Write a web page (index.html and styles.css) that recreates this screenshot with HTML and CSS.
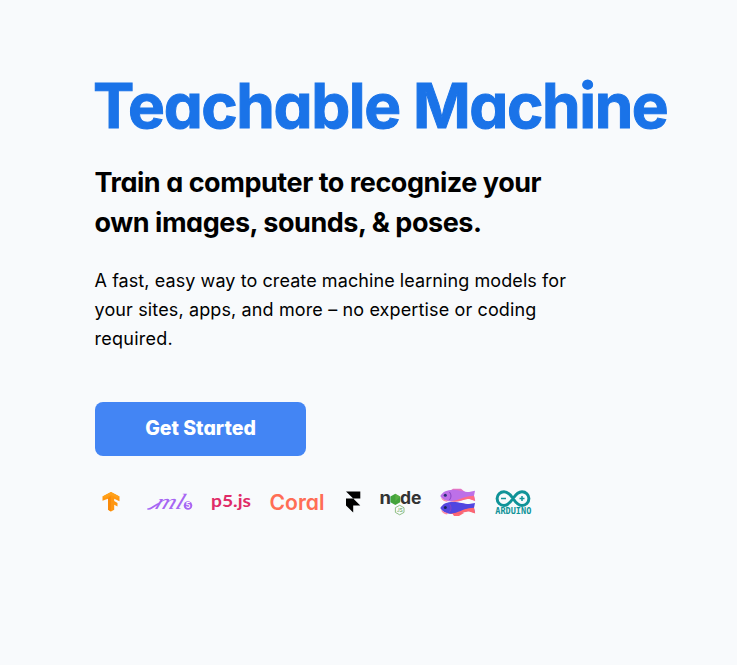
FILE: index.html
```html
<!DOCTYPE html>
<html lang="en">
<head>
<meta charset="utf-8">
<title>Teachable Machine</title>
<link rel="stylesheet" href="styles.css">
</head>
<body>
<main class="hero">
  <h1 class="title">Teachable Machine</h1>
  <h2 class="tagline">Train a computer to recognize your<br>own images, sounds, &amp; poses.</h2>
  <p class="intro"><span class="intro-a">A fast, easy way to create machine learning models for</span><br><span class="intro-b">your sites, apps, and more – no expertise or coding</span><br><span class="intro-c">required.</span></p>
  <a class="button" href="#">Get Started</a>
  <div class="logos">
    <svg class="tensorflow" width="18" height="20" viewBox="0 0 18 20" aria-label="TensorFlow">
      <path fill="#ff9610" d="M9 0 .5 4.500v4.300L6 6.800v10.900l3 1.700 3.200-1.700v-5l3.300 1.800v-3.600l-3.300-1.900V6.800l5.300 2.400V4.500z"/>
      <path fill="#f98a0a" d="M9 4v15.400l-3-1.700V6.300z"/>
      <path fill="#ffa11a" d="m9 0 8.500 4.500L15 6 9 3 3 6 .5 4.500z"/>
    </svg>
    <svg width="47" height="22" viewBox="0 0 47 22" aria-label="ml5">
      <path fill="none" stroke="#a766f3" stroke-width="1.700" stroke-linecap="round" d="M1 18C4 18.500 8 14 12 12.500"/>
      <text class="script" transform="translate(7 18) skewX(-20)" textLength="28" lengthAdjust="spacingAndGlyphs">ml</text>
      <circle cx="41" cy="14.500" r="4.300" fill="#a766f3"/>
      <text class="five" x="41" y="17" text-anchor="middle">5</text>
    </svg>
    <svg width="40" height="24" viewBox="0 0 40 24"><text class="p5" x="-1" y="17" textLength="40" lengthAdjust="spacingAndGlyphs">p5.js</text></svg>
    <svg width="55" height="22" viewBox="0 0 55 22"><text class="coral" x="-.5" y="19" textLength="55" lengthAdjust="spacingAndGlyphs">Coral</text></svg>
    <svg class="framer" width="15" height="22" viewBox="0 0 15 22" aria-label="Framer"><path d="M0 .5h14.300v7H7.200zM0 7.500h7.200l7.100 7H7.200v7L0 14.500z"/></svg>
    <svg class="nodejs" width="42" height="28" viewBox="0 0 42 28">
      <g class="node"><text x="-.5" y="16" textLength="11.500" lengthAdjust="spacingAndGlyphs">n</text><text x="20" y="16" textLength="21.500" lengthAdjust="spacingAndGlyphs">de</text></g>
      <path fill="#43a33b" d="m15.300 5.700 4.900 2.800v5.700L15.300 17l-4.900-2.800V8.500z"/>
      <path fill="#77bd4d" d="m15.300 5.700 4.900 2.800-4.900 5z" opacity=".4"/>
      <path fill="#f8fafc" stroke="#73ae68" stroke-width=".8" d="m19.700 17.300 4.300 2.400v4.700l-4.300 2.400-4.300-2.400v-4.700z"/>
      <text class="js" x="19.700" y="24.200" text-anchor="middle">JS</text>
    </svg>
    <svg width="36" height="29" viewBox="0 0 36 29" aria-label="Glitch">
      <path fill="#e273c4" d="M8 4 13 .8h8L25 4z"/>
      <path fill="#bd70e8" d="M.3 8C3 3.500 7 2 13 2c7 0 11 2 16 2l6-1.200-1 5 1 5-6-2.300c-5 0-7 3-15 3C7 13.500 3 12.500.3 8"/>
      <path fill="#ff6c86" d="M10 13.300C19 12.500 23 9 29 8.300l5-.5 1.200 5.200-6-2c-6 0-9 4-19.200 2.300z"/>
      <path fill="#ff6874" d="M12 25h12l-5 3h-5z"/>
      <path fill="#5246e0" d="M.3 20c2.700-4.500 6.700-6 12.700-6 7 0 11 2 16 2l6-1-1 5 1 5-6-2c-5 0-7 3-15 3-7 0-11-1.500-13.700-6"/>
      <path fill="#ff6670" d="M10 25.800C19 25 23 21 29 20.300l5-.5 1.200 5.700-6-2c-6 0-9 4-19.200 2.300z"/>
      <path fill="#ff88a0" d="M1 9.500c3 2.500 5 3 7 3l-1 1.200C4 13.500 2 12 1 9.500M1 22c3 2 5 3 7 3l-1 1.500C4 26 2 24.500 1 22"/>
      <path fill="none" stroke="#8a45c4" d="M9.500 4c2 3 2 5 0 8M9.500 16c2 3 2 5 0 8"/>
      <circle cx="5.300" cy="7.300" r="1.500" fill="#283077"/><circle cx="5.300" cy="19.500" r="1.500" fill="#17235f"/>
    </svg>
    <svg class="uno" width="37" height="27" viewBox="0 0 37 27">
      <path fill="none" stroke="#109398" stroke-width="3" d="M18 9.500C15 5 12.500 2.700 9 2.700a6.900 6.900 0 0 0 0 13.800c3.500 0 6-2.500 9-7s5.500-6.800 9-6.800a6.900 6.900 0 0 1 0 13.800c-3.500 0-6-2.500-9-7z"/>
      <path stroke="#109398" stroke-width="1.500" d="M6 9.500h5M24.500 9.500h5M27 7v5"/>
      <text class="arduino" x=".3" y="25.300" textLength="36" lengthAdjust="spacingAndGlyphs">ARDUINO</text>
    </svg>
  </div>
</main>
</body>
</html>
```
FILE: styles.css
```css
body {
  margin: 0;
  min-height: 665px;
  background: #f8fafc;
  color: #000;
  font-family: Inter, "Open Sans", sans-serif;
}
.hero {
  padding: 66px 0 0 95px;
}
.title, .tagline, .button, .coral {
  font-feature-settings: "cv11";
}
.title {
  margin: 0 0 0 -2px;
  font-size: 62px;
  line-height: 80px;
  font-weight: 700;
  letter-spacing: -1.420px;
  color: #1a73e8;
  -webkit-text-stroke: 1px #1a73e8;
  white-space: nowrap;
}
.tagline {
  margin: 17px 0 0 -0.500px;
  font-size: 27px;
  line-height: 40px;
  font-weight: 700;
  letter-spacing: -0.450px;
  white-space: nowrap;
}
.intro {
  margin: 23px 0 0 -0.500px;
  font-size: 18px;
  line-height: 29px;
  white-space: nowrap;
}
.intro-a { letter-spacing: 0.080px; }
.intro-b { letter-spacing: 0.130px; }
.intro-c { letter-spacing: 0.260px; }
.button {
  display: flex;
  align-items: center;
  justify-content: center;
  box-sizing: border-box;
  width: 211px;
  height: 54px;
  margin-top: 49px;
  padding-bottom: 2px;
  border-radius: 8px;
  background: #4385f4;
  color: #fff;
  font-size: 19.500px;
  font-weight: 800;
  text-decoration: none;
}
.logos {
  display: flex;
  align-items: center;
  gap: 18px;
  height: 30px;
  margin: 31px 0 0 7px;
}
.logos svg {
  flex: none;
  overflow: visible;
}
.logos .tensorflow { margin-right: 9px; }
.logos .framer { margin-left: 3px; }
.logos .nodejs { margin-left: 1px; }
.logos .uno { margin-left: 1px; }
.script { font: italic 22px "Liberation Serif", serif; fill: #a766f3; }
.five { font: 700 7px Inter, sans-serif; fill: #fff; }
.p5 { font: 700 17.500px Lato, sans-serif; fill: #e02b68; }
.coral { font-family: Inter, sans-serif; font-weight: 600; font-size: 21px; fill: #ff6d55; }
.node { font: 700 17px Inter, sans-serif; fill: #333; }
.js { font: 5px Inter, sans-serif; fill: #519d48; }
.arduino { font: 700 8px "DejaVu Sans Mono", monospace; fill: #109398; }
```
